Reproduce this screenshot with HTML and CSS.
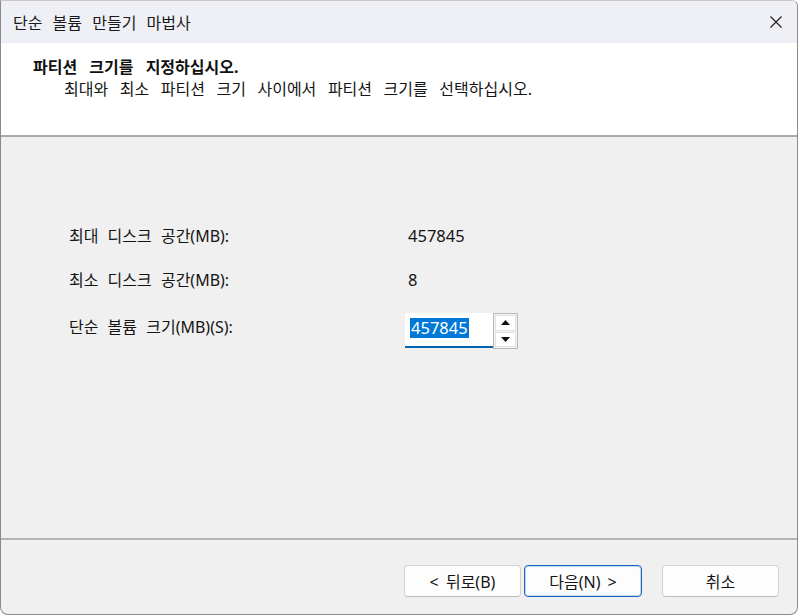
FILE: index.html
```html
<!DOCTYPE html>
<html lang="ko">
<head>
<meta charset="utf-8">
<title>단순 볼륨 만들기 마법사</title>
<link rel="stylesheet" href="styles.css">
</head>
<body>
<div class="window">
  <div class="titlebar">
    <span class="title">단순 볼륨 만들기 마법사</span>
    <span class="close" aria-label="닫기">
      <svg width="14" height="14" viewBox="0 0 14 14"><path d="M1.5 1.5 L12.5 12.5 M12.5 1.5 L1.5 12.5" stroke="#222" stroke-width="1.2" fill="none"/></svg>
    </span>
  </div>
  <div class="header">
    <div class="heading">파티션 크기를 지정하십시오.</div>
    <div class="subtitle">최대와 최소 파티션 크기 사이에서 파티션 크기를 선택하십시오.</div>
  </div>
  <div class="content">
    <div class="grid">
      <div class="label">최대 디스크 공간(MB):</div>
      <div class="value num">457845</div>
      <div class="label">최소 디스크 공간(MB):</div>
      <div class="value num">8</div>
      <div class="label label-spin">단순 볼륨 크기(MB)(S):</div>
      <div class="spinner">
        <div class="edit"><span class="sel num">457845</span></div>
        <div class="spins">
          <div class="spin"><svg width="9" height="5" viewBox="0 0 9 5"><path d="M0 5 L4.5 0 L9 5 Z" fill="#111"/></svg></div>
          <div class="spin"><svg width="9" height="5" viewBox="0 0 9 5"><path d="M0 0 L9 0 L4.5 5 Z" fill="#111"/></svg></div>
        </div>
      </div>
    </div>
  </div>
  <div class="footer">
    <button class="btn">&lt; 뒤로(B)</button>
    <button class="btn default">다음(N) &gt;</button>
    <button class="btn cancel">취소</button>
  </div>
</div>
</body>
</html>
```
FILE: styles.css
```css
* { box-sizing: border-box; }
html, body {
  margin: 0;
  width: 800px;
  height: 616px;
  background: #ffffff;
  overflow: hidden;
}
body {
  font-family: "Noto Sans", "Noto Sans CJK KR", sans-serif;
  font-size: 16px;
  color: #151515;
}
.window {
  width: 798px;
  height: 615px;
  border: 1px solid #8a8a8a;
  border-top-color: #c8c8c8;
  border-radius: 0 6px 8px 8px;
  background: #f0f0f0;
  display: flex;
  flex-direction: column;
  overflow: hidden;
}
.titlebar {
  height: 42px;
  background: #eff0f5;
  display: flex;
  align-items: center;
  justify-content: space-between;
  padding: 0 14px 0 12px;
  flex: none;
}
.title {
  font-size: 16px;
  word-spacing: 6px;
  color: #1a1a1a;
  margin-top: -1px;
}
.close {
  display: flex;
  width: 14px;
  height: 14px;
  margin-top: -1px;
}
.header {
  height: 94px;
  background: #ffffff;
  border-bottom: 2px solid #aaaaaa;
  padding: 14px 0 0 32px;
  flex: none;
}
.heading {
  font-weight: bold;
  font-size: 16px;
  line-height: 20px;
  word-spacing: 8px;
  color: #111;
}
.subtitle {
  margin-top: 1px;
  line-height: 22px;
  padding-left: 31px;
  word-spacing: 7.4px;
}
.content {
  flex: 1;
  padding: 89px 0 0 68px;
}
.grid {
  display: grid;
  grid-template-columns: 336px auto;
  grid-template-rows: 20px 20px auto;
  row-gap: 24px;
  align-items: start;
}
.label {
  line-height: 20px;
  word-spacing: 5px;
}
.label-spin {
  position: relative;
  top: 3px;
}
.value {
  line-height: 20px;
  padding-left: 3px;
}
.num {
  font-size: 16.5px;
}
.spinner {
  display: flex;
  height: 35px;
  margin-top: -1px;
}
.edit {
  width: 88px;
  height: 35px;
  background: #ffffff;
  border-bottom: 2px solid #0063b1;
  padding: 4px 0 0 5px;
}
.sel {
  display: inline-block;
  background: #0078d7;
  color: #ffffff;
  line-height: 20px;
  padding: 0 1px;
}
.spins {
  width: 25px;
  height: 36px;
  border: 1px solid #b8b8b8;
  background: #f4f4f4;
  display: flex;
  flex-direction: column;
  padding: 1px;
  gap: 1px;
}
.spin {
  flex: 1;
  background: #ffffff;
  border: 1px solid #e2e2e2;
  display: flex;
  align-items: center;
  justify-content: center;
}
.footer {
  height: 76px;
  border-top: 2px solid #b4b4b4;
  flex: none;
  display: flex;
  align-items: flex-start;
  justify-content: flex-end;
  padding: 25px 18px 0 0;
  gap: 3px;
}
.btn {
  width: 117px;
  height: 32px;
  background: #fdfdfd;
  border: 1px solid #d2d2d2;
  border-bottom-color: #bdbdbd;
  border-radius: 4px;
  font-family: "Noto Sans", "Noto Sans CJK KR", sans-serif;
  font-size: 16px;
  color: #151515;
  padding: 0;
  word-spacing: 3px;
}
.btn.default {
  width: 118px;
  border: 1px solid #1e66bd;
  box-shadow: inset 0 0 0 1px rgba(30, 102, 189, 0.25);
}
.btn.cancel {
  margin-left: 17px;
}
```
